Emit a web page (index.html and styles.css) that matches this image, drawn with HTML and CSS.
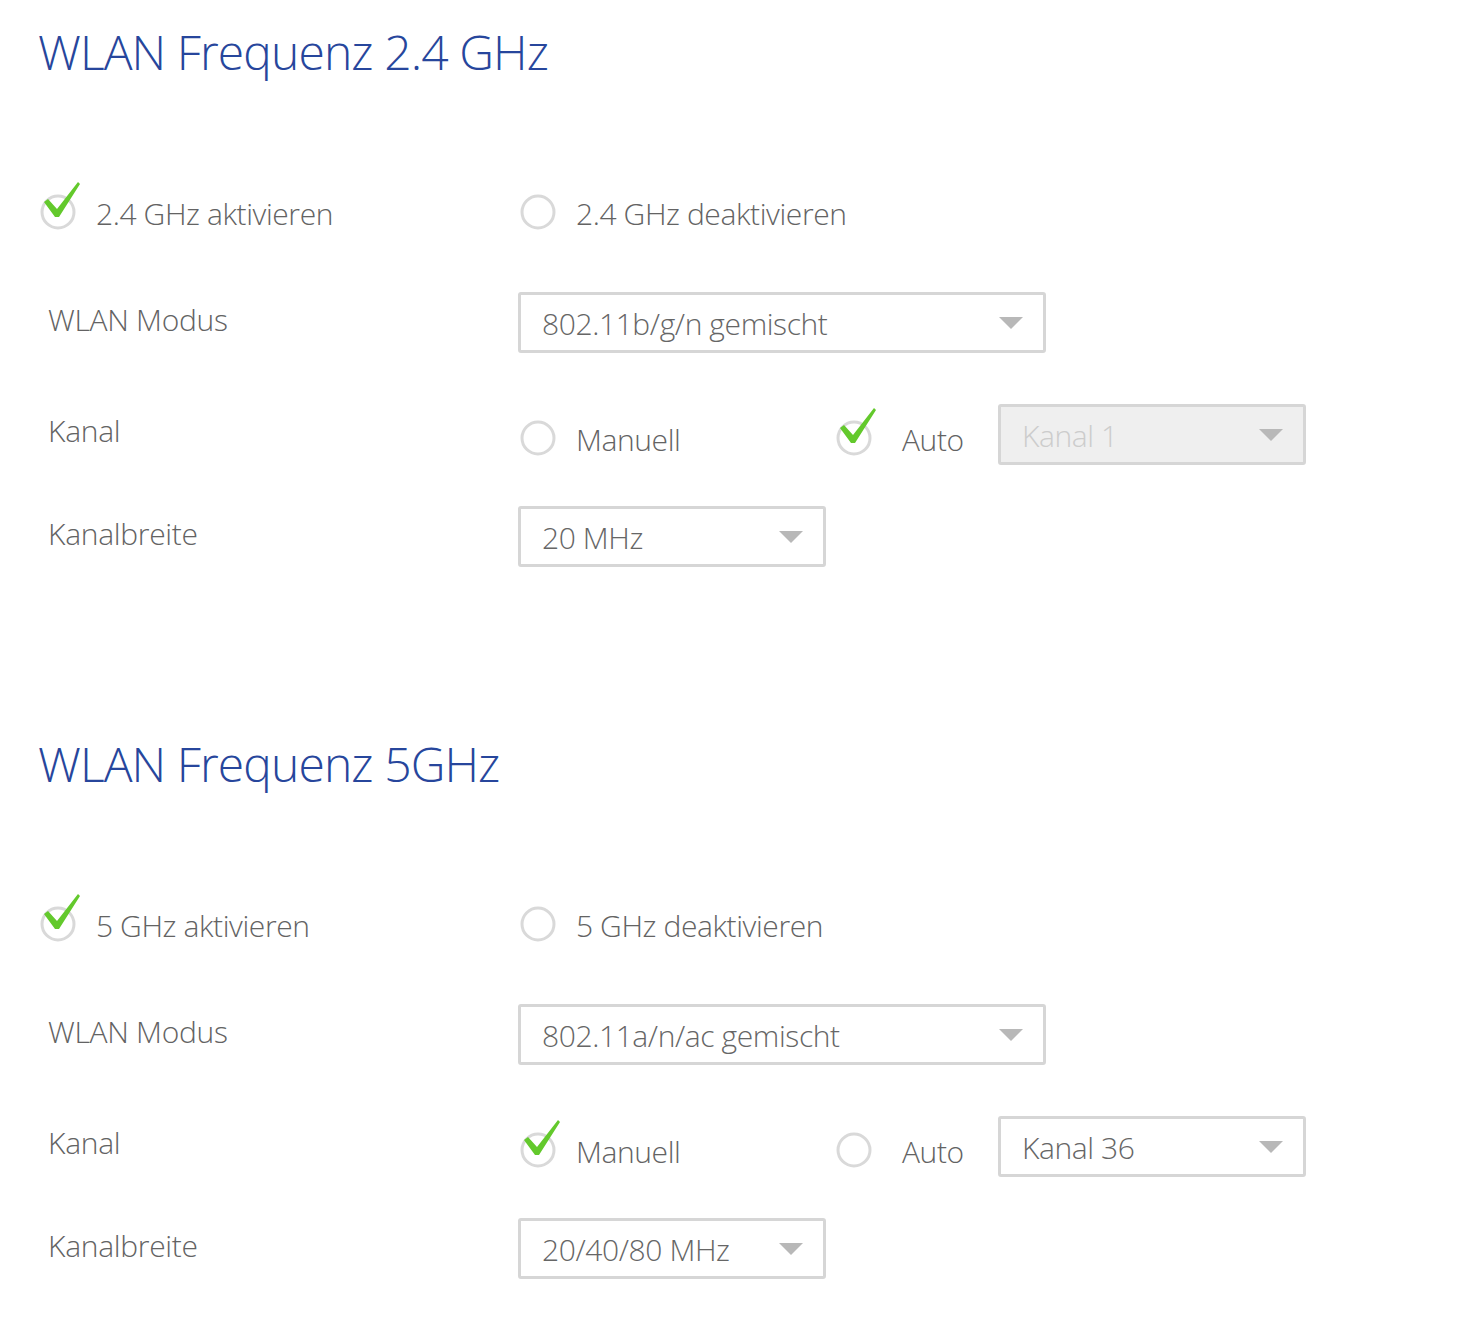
FILE: index.html
```html
<!DOCTYPE html>
<html lang="de">
<head>
<meta charset="utf-8">
<title>WLAN</title>
<link rel="stylesheet" href="styles.css">
</head>
<body>
<div class="page">

  <section class="band">
    <h1 class="title">WLAN Frequenz 2.4 GHz</h1>
    <div class="row row-toggle">
      <div class="col1">
        <span class="opt">
          <svg class="ico" viewBox="0 0 44 52" width="44" height="52"><circle cx="20" cy="31" r="16" class="ring"/><polygon class="tick" points="6,21 10,18 19,28 40,1 42,3 21,36 17,36"/></svg>
          <span class="opt-text">2.4 GHz aktivieren</span>
        </span>
      </div>
      <div class="col2">
        <span class="opt">
          <svg class="ico" viewBox="0 0 44 52" width="44" height="52"><circle cx="20" cy="31" r="16" class="ring"/></svg>
          <span class="opt-text">2.4 GHz deaktivieren</span>
        </span>
      </div>
    </div>
    <div class="row row-mode">
      <div class="col1 label">WLAN Modus</div>
      <div class="col2">
        <div class="select wide"><span class="sel-text">802.11b/g/n gemischt</span><span class="caret"></span></div>
      </div>
    </div>
    <div class="row row-kanal">
      <div class="col1 label lbl-kanal">Kanal</div>
      <div class="col2 kanal-opts">
        <span class="opt opt-manuell">
          <svg class="ico" viewBox="0 0 44 52" width="44" height="52"><circle cx="20" cy="31" r="16" class="ring"/></svg>
          <span class="opt-text">Manuell</span>
        </span>
        <span class="opt opt-auto">
          <svg class="ico" viewBox="0 0 44 52" width="44" height="52"><circle cx="20" cy="31" r="16" class="ring"/><polygon class="tick" points="6,21 10,18 19,28 40,1 42,3 21,36 17,36"/></svg>
          <span class="opt-text">Auto</span>
        </span>
        <div class="select mid disabled"><span class="sel-text">Kanal 1</span><span class="caret"></span></div>
      </div>
    </div>
    <div class="row row-breite">
      <div class="col1 label">Kanalbreite</div>
      <div class="col2">
        <div class="select mid"><span class="sel-text">20 MHz</span><span class="caret"></span></div>
      </div>
    </div>
  </section>

  <section class="band band-last">
    <h1 class="title">WLAN Frequenz 5GHz</h1>
    <div class="row row-toggle">
      <div class="col1">
        <span class="opt">
          <svg class="ico" viewBox="0 0 44 52" width="44" height="52"><circle cx="20" cy="31" r="16" class="ring"/><polygon class="tick" points="6,21 10,18 19,28 40,1 42,3 21,36 17,36"/></svg>
          <span class="opt-text">5 GHz aktivieren</span>
        </span>
      </div>
      <div class="col2">
        <span class="opt">
          <svg class="ico" viewBox="0 0 44 52" width="44" height="52"><circle cx="20" cy="31" r="16" class="ring"/></svg>
          <span class="opt-text">5 GHz deaktivieren</span>
        </span>
      </div>
    </div>
    <div class="row row-mode">
      <div class="col1 label">WLAN Modus</div>
      <div class="col2">
        <div class="select wide"><span class="sel-text">802.11a/n/ac gemischt</span><span class="caret"></span></div>
      </div>
    </div>
    <div class="row row-kanal">
      <div class="col1 label lbl-kanal">Kanal</div>
      <div class="col2 kanal-opts">
        <span class="opt opt-manuell">
          <svg class="ico" viewBox="0 0 44 52" width="44" height="52"><circle cx="20" cy="31" r="16" class="ring"/><polygon class="tick" points="6,21 10,18 19,28 40,1 42,3 21,36 17,36"/></svg>
          <span class="opt-text">Manuell</span>
        </span>
        <span class="opt opt-auto">
          <svg class="ico" viewBox="0 0 44 52" width="44" height="52"><circle cx="20" cy="31" r="16" class="ring"/></svg>
          <span class="opt-text">Auto</span>
        </span>
        <div class="select mid"><span class="sel-text">Kanal 36</span><span class="caret"></span></div>
      </div>
    </div>
    <div class="row row-breite">
      <div class="col1 label">Kanalbreite</div>
      <div class="col2">
        <div class="select mid"><span class="sel-text">20/40/80 MHz</span><span class="caret"></span></div>
      </div>
    </div>
  </section>

</div>
</body>
</html>
```
FILE: styles.css
```css
html, body {
  margin: 0;
  padding: 0;
  background: #ffffff;
}
body {
  font-family: "Open Sans", "DejaVu Sans", sans-serif;
  font-weight: 300;
  color: #636363;
}
.page {
  padding-left: 38px;
}
.band {
  height: 712px;
  display: flex;
  flex-direction: column;
}
.band-last {
  height: auto;
  padding-bottom: 40px;
}
.title {
  margin: 18px 0 0 0;
  font-size: 48px;
  line-height: 68px;
  font-weight: 300;
  color: #27469c;
  letter-spacing: -0.9px;
}
.row {
  display: flex;
  align-items: center;
  height: 61px;
}
.col1 {
  width: 480px;
  flex: none;
}
.col2 {
  flex: none;
}
.row-toggle {
  margin-top: 97px;
}
.row-mode {
  margin-top: 48px;
}
.row-kanal {
  margin-top: 51px;
}
.row-breite {
  margin-top: 41px;
}
.label {
  padding-left: 10px;
  box-sizing: border-box;
  font-size: 30px;
  line-height: 40px;
  margin-top: -6px;
  letter-spacing: -0.3px;
}
.lbl-kanal {
  margin-top: -8px;
}
.opt {
  display: inline-flex;
  align-items: center;
}
.ico {
  flex: none;
  margin-top: -10px;
}
.ring {
  fill: none;
  stroke: #d9d9d9;
  stroke-width: 3;
}
.tick {
  fill: #63c92c;
}
.opt-text {
  font-size: 30px;
  line-height: 40px;
  margin-left: 14px;
  margin-top: 4px;
  letter-spacing: -0.4px;
}
.kanal-opts {
  display: flex;
  align-items: center;
}
.opt-manuell {
  width: 316px;
  margin-top: 6px;
}
.opt-auto {
  width: 164px;
  margin-top: 6px;
}
.opt-auto .opt-text {
  margin-left: 24px;
}
.select {
  box-sizing: border-box;
  height: 61px;
  border: 3px solid #d6d6d6;
  border-radius: 3px;
  background: #ffffff;
  display: flex;
  align-items: center;
  justify-content: space-between;
  padding: 0 20px 0 21px;
}
.select.wide {
  width: 528px;
}
.select.mid {
  width: 308px;
}
.select.disabled {
  background: #efefef;
}
.select.disabled .sel-text {
  color: #cccccc;
}
.sel-text {
  font-size: 30px;
  line-height: 40px;
  color: #666666;
  margin-top: 2px;
  letter-spacing: -0.4px;
}
.caret {
  width: 0;
  height: 0;
  border-left: 12px solid transparent;
  border-right: 12px solid transparent;
  border-top: 12px solid #b8b8b8;
}
```
